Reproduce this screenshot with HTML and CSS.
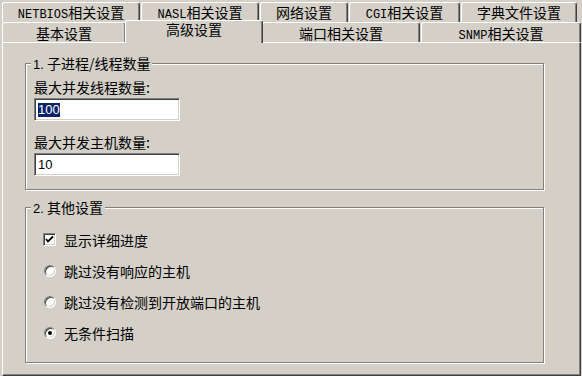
FILE: index.html
```html
<!DOCTYPE html>
<html lang="zh-CN">
<head>
    <meta charset="UTF-8">
    <meta name="viewport" content="width=device-width, initial-scale=1.0">
    <title>高级设置</title>
    <link rel="stylesheet" href="styles.css">
</head>
<body>
    <div class="dialog">
        <!-- back row of tabs -->
        <div class="tab-row tab-row-back">
            <div class="tab tab-netbios"><span class="lat">NETBIOS</span>相关设置</div>
            <div class="tab tab-nasl"><span class="lat">NASL</span>相关设置</div>
            <div class="tab tab-net">网络设置</div>
            <div class="tab tab-cgi"><span class="lat">CGI</span>相关设置</div>
            <div class="tab tab-dict">字典文件设置</div>
        </div>
        <!-- front row, touching the panel -->
        <div class="tab-row tab-row-front">
            <div class="tab tab-basic">基本设置</div>
            <div class="tab tab-advanced active">高级设置</div>
            <div class="tab tab-port">端口相关设置</div>
            <div class="tab tab-snmp"><span class="lat">SNMP</span>相关设置</div>
        </div>

        <div class="panel">
            <div class="group group-threads">
                <div class="group-title"><span class="num">1.</span> 子进程/线程数量</div>
                <label class="field-label">最大并发线程数量:</label>
                <div class="textbox"><span class="sel">100</span></div>
                <label class="field-label second">最大并发主机数量:</label>
                <div class="textbox"><span>10</span></div>
            </div>

            <div class="group group-other">
                <div class="group-title"><span class="num">2.</span> 其他设置</div>
                <div class="option">
                    <span class="checkbox">
                        <svg width="9" height="9" viewBox="0 0 9 9"><polyline points="1,4 3,6.5 8,1.5" fill="none" stroke="#000" stroke-width="1.8"/></svg>
                    </span>
                    <span>显示详细进度</span>
                </div>
                <div class="option">
                    <span class="radio"></span>
                    <span>跳过没有响应的主机</span>
                </div>
                <div class="option">
                    <span class="radio"></span>
                    <span>跳过没有检测到开放端口的主机</span>
                </div>
                <div class="option">
                    <span class="radio checked"></span>
                    <span>无条件扫描</span>
                </div>
            </div>
        </div>
    </div>
</body>
</html>
```

FILE: styles.css
```css
* {
    margin: 0;
    padding: 0;
    box-sizing: border-box;
}

body {
    background: #d4d0c8;
    font-family: "Noto Sans CJK SC", sans-serif;
    font-size: 14px;
    color: #000;
    width: 582px;
    height: 376px;
    overflow: hidden;
}

.dialog {
    padding-top: 2px;
}

.tab-row {
    display: flex;
    gap: 1px;
    padding-left: 2px;
    height: 20px;
}

.tab {
    height: 20px;
    background: #d4d0c8;
    border-top: 1px solid #fff;
    border-left: 1px solid #fff;
    border-right: 1px solid #404040;
    box-shadow: inset -1px 0 0 #808080;
    border-radius: 3px 3px 0 0;
    text-align: center;
    line-height: 18px;
    white-space: nowrap;
}

.tab-row-back .tab {
    line-height: 14px;
    padding-top: 2px;
}

.tab-row-front .tab {
    padding-top: 1px;
}

.lat {
    font-family: "Liberation Mono", monospace;
    font-size: 12px;
}

.tab-netbios { width: 138px; }
.tab-nasl { width: 118px; }
.tab-net { width: 88px; }
.tab-cgi { width: 111px; }
.tab-dict { width: 116px; }

.tab-basic { width: 124px; }
.tab-advanced { width: 134px; }
.tab-port { width: 158px; }
.tab-snmp { width: 160px; }

.tab-row-front .tab.active {
    width: 138px;
    height: 23px;
    margin: -2px -2px -1px;
    padding-top: 0;
    line-height: 16px;
    position: relative;
    z-index: 1;
}

.panel {
    margin-left: 2px;
    width: 579px;
    height: 334px;
    border-top: 1px solid #fff;
    border-left: 1px solid #fff;
    border-right: 1px solid #404040;
    border-bottom: 1px solid #404040;
    box-shadow: inset -1px -1px 0 #808080;
    padding: 20px 0 0 22px;
}

.group {
    position: relative;
    width: 519px;
    border: 1px solid #808080;
    box-shadow: 1px 1px 0 #fff, inset 1px 1px 0 #fff;
}

.group-threads {
    height: 127px;
    padding: 15px 0 0 8px;
}

.group-other {
    height: 156px;
    margin-top: 17px;
    padding: 16px 0 0 17px;
}

.group-title {
    position: absolute;
    top: -9px;
    left: 5px;
    padding: 0 2px;
    background: #d4d0c8;
    line-height: 16px;
}

.num {
    font-family: "Liberation Sans", sans-serif;
    font-size: 13px;
}

.field-label {
    display: block;
    line-height: 16px;
    margin-bottom: 3px;
}

.field-label.second {
    margin-top: 13px;
}

.textbox {
    width: 146px;
    height: 23px;
    background: #fff;
    border-top: 1px solid #808080;
    border-left: 1px solid #808080;
    border-bottom: 1px solid #fff;
    border-right: 1px solid #fff;
    box-shadow: inset 1px 1px 0 #404040, inset -1px -1px 0 #d4d0c8;
    display: flex;
    align-items: center;
    padding-left: 3px;
    font-family: "Liberation Sans", sans-serif;
    font-size: 13px;
}

.textbox span {
    display: inline-block;
    height: 14px;
    line-height: 14px;
}

.sel {
    background: #0a246a;
    color: #fff;
}

.option {
    display: flex;
    align-items: center;
    gap: 8px;
    height: 31px;
}

.checkbox {
    width: 13px;
    height: 13px;
    background: #fff;
    border-top: 1px solid #808080;
    border-left: 1px solid #808080;
    border-bottom: 1px solid #fff;
    border-right: 1px solid #fff;
    box-shadow: inset 1px 1px 0 #404040, inset -1px -1px 0 #d4d0c8;
    display: flex;
    align-items: center;
    justify-content: center;
}

.checkbox svg {
    display: block;
}

.radio {
    width: 12px;
    height: 12px;
    margin-left: 1px;
    border-radius: 50%;
    background: #fff;
    border: 1px solid;
    border-color: #808080 #fff #fff #808080;
    box-shadow: inset 1px 1px 0 #404040, inset -1px -1px 0 #d4d0c8;
    display: flex;
    align-items: center;
    justify-content: center;
}

.radio.checked::after {
    content: "";
    width: 4px;
    height: 4px;
    border-radius: 50%;
    background: #000;
}
```
